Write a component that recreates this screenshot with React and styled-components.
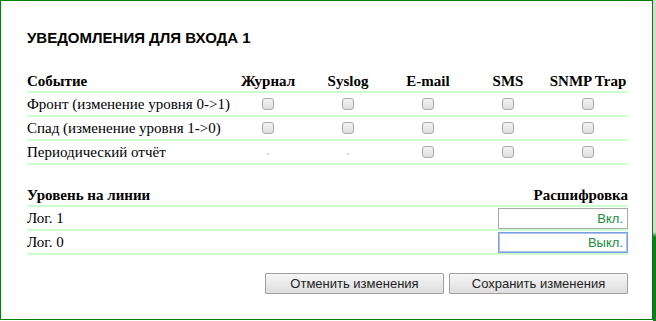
import React from "react";
import styled, { createGlobalStyle } from "styled-components";

const GlobalStyle = createGlobalStyle`
  html, body {
    margin: 0;
    padding: 0;
    background: #ffffff;
  }
  body {
    width: 656px;
    height: 321px;
    overflow: hidden;
  }
`;

const Page = styled.div`
  display: flex;
  width: 656px;
  height: 321px;
`;

const SideStrip = styled.div`
  flex: 1;
  background: linear-gradient(to bottom, #d8d8d8 0, #d8d8d8 232px, #0c7d22 237px, #0c7d22 100%);
`;

const Dialog = styled.div`
  box-sizing: border-box;
  width: 653px;
  height: 320px;
  border: 1px solid #008000;
  background: #ffffff;
  padding: 28px 24px 0 26px;
  display: flex;
  flex-direction: column;
`;

const Title = styled.div`
  font-family: "Liberation Sans", Arial, sans-serif;
  font-weight: bold;
  font-size: 15px;
  line-height: 18px;
  color: #000;
  margin-bottom: 21px;
`;

const Table = styled.div`
  display: flex;
  flex-direction: column;
  font-family: "Liberation Serif", "Times New Roman", serif;
  font-size: 15px;
  color: #000;
  margin-bottom: ${(p) => p.$gap || 0}px;
`;

const Row = styled.div`
  display: grid;
  grid-template-columns: ${(p) => p.$cols};
  height: 22px;
  align-items: ${(p) => (p.$head ? "end" : "center")};
  border-bottom: 2px solid #ccffcc;
  font-weight: ${(p) => (p.$head ? "bold" : "normal")};
  line-height: 18px;
  padding-bottom: ${(p) => (p.$head ? 1 : 0)}px;
  box-sizing: content-box;
`;

const Cell = styled.div`
  text-align: ${(p) => p.$align || "left"};
  display: flex;
  justify-content: ${(p) =>
    p.$align === "center" ? "center" : p.$align === "right" ? "flex-end" : "flex-start"};
  align-items: center;
  white-space: nowrap;
`;

const Check = styled.input.attrs({ type: "checkbox" })`
  appearance: none;
  -webkit-appearance: none;
  margin: 0;
  width: 12px;
  height: 12px;
  box-sizing: border-box;
  border: 1px solid #a9a9a9;
  border-radius: 3px;
  background: linear-gradient(to bottom, #f4f4f4, #dedede);
`;

const Dot = styled.span`
  display: block;
  width: 2px;
  height: 2px;
  background: #d6d6d6;
  margin-top: 3px;
`;

const TextInput = styled.input`
  box-sizing: border-box;
  width: 130px;
  height: 21px;
  margin: 0;
  padding: 0 4px;
  border: 1px solid ${(p) => (p.$focused ? "#7b9fe0" : "#a9a9a9")};
  box-shadow: ${(p) => (p.$focused ? "0 0 0 1px #a9c3ee inset" : "none")};
  outline: none;
  text-align: right;
  font-family: "Liberation Sans", Arial, sans-serif;
  font-size: 13px;
  color: #1a8c3c;
  background: #fff;
`;

const Buttons = styled.div`
  display: flex;
  justify-content: flex-end;
  gap: 5px;
  margin-top: 18px;
`;

const Button = styled.button`
  box-sizing: border-box;
  width: 179px;
  height: 21px;
  margin: 0;
  padding: 0;
  border: 1px solid #a0a0a0;
  border-radius: 1px;
  background: linear-gradient(to bottom, #f6f6f6, #dddddd);
  font-family: "Liberation Sans", Arial, sans-serif;
  font-size: 13px;
  color: #222;
`;

const eventCols = "201px repeat(5, 80px)";
const levelCols = "1fr 130px";

const channels = ["Журнал", "Syslog", "E-mail", "SMS", "SNMP Trap"];

const events = [
  { name: "Фронт (изменение уровня 0->1)", avail: [1, 1, 1, 1, 1] },
  { name: "Спад (изменение уровня 1->0)", avail: [1, 1, 1, 1, 1] },
  { name: "Периодический отчёт", avail: [0, 0, 1, 1, 1] },
];

const levels = [
  { name: "Лог. 1", value: "Вкл." },
  { name: "Лог. 0", value: "Выкл.", focused: true },
];

export default function App() {
  return (
    <>
      <GlobalStyle />
      <Page>
        <Dialog>
          <Title>УВЕДОМЛЕНИЯ ДЛЯ ВХОДА 1</Title>

          <Table $gap={17}>
            <Row $cols={eventCols} $head>
              <Cell>Событие</Cell>
              {channels.map((c) => (
                <Cell key={c} $align="center">
                  {c}
                </Cell>
              ))}
            </Row>
            {events.map((e) => (
              <Row key={e.name} $cols={eventCols}>
                <Cell>{e.name}</Cell>
                {e.avail.map((a, i) => (
                  <Cell key={i} $align="center">
                    {a ? <Check /> : <Dot />}
                  </Cell>
                ))}
              </Row>
            ))}
          </Table>

          <Table>
            <Row $cols={levelCols} $head>
              <Cell>Уровень на линии</Cell>
              <Cell $align="right">Расшифровка</Cell>
            </Row>
            {levels.map((l) => (
              <Row key={l.name} $cols={levelCols}>
                <Cell>{l.name}</Cell>
                <Cell $align="right">
                  <TextInput defaultValue={l.value} $focused={l.focused} />
                </Cell>
              </Row>
            ))}
          </Table>

          <Buttons>
            <Button>Отменить изменения</Button>
            <Button>Сохранить изменения</Button>
          </Buttons>
        </Dialog>
        <SideStrip />
      </Page>
    </>
  );
}
